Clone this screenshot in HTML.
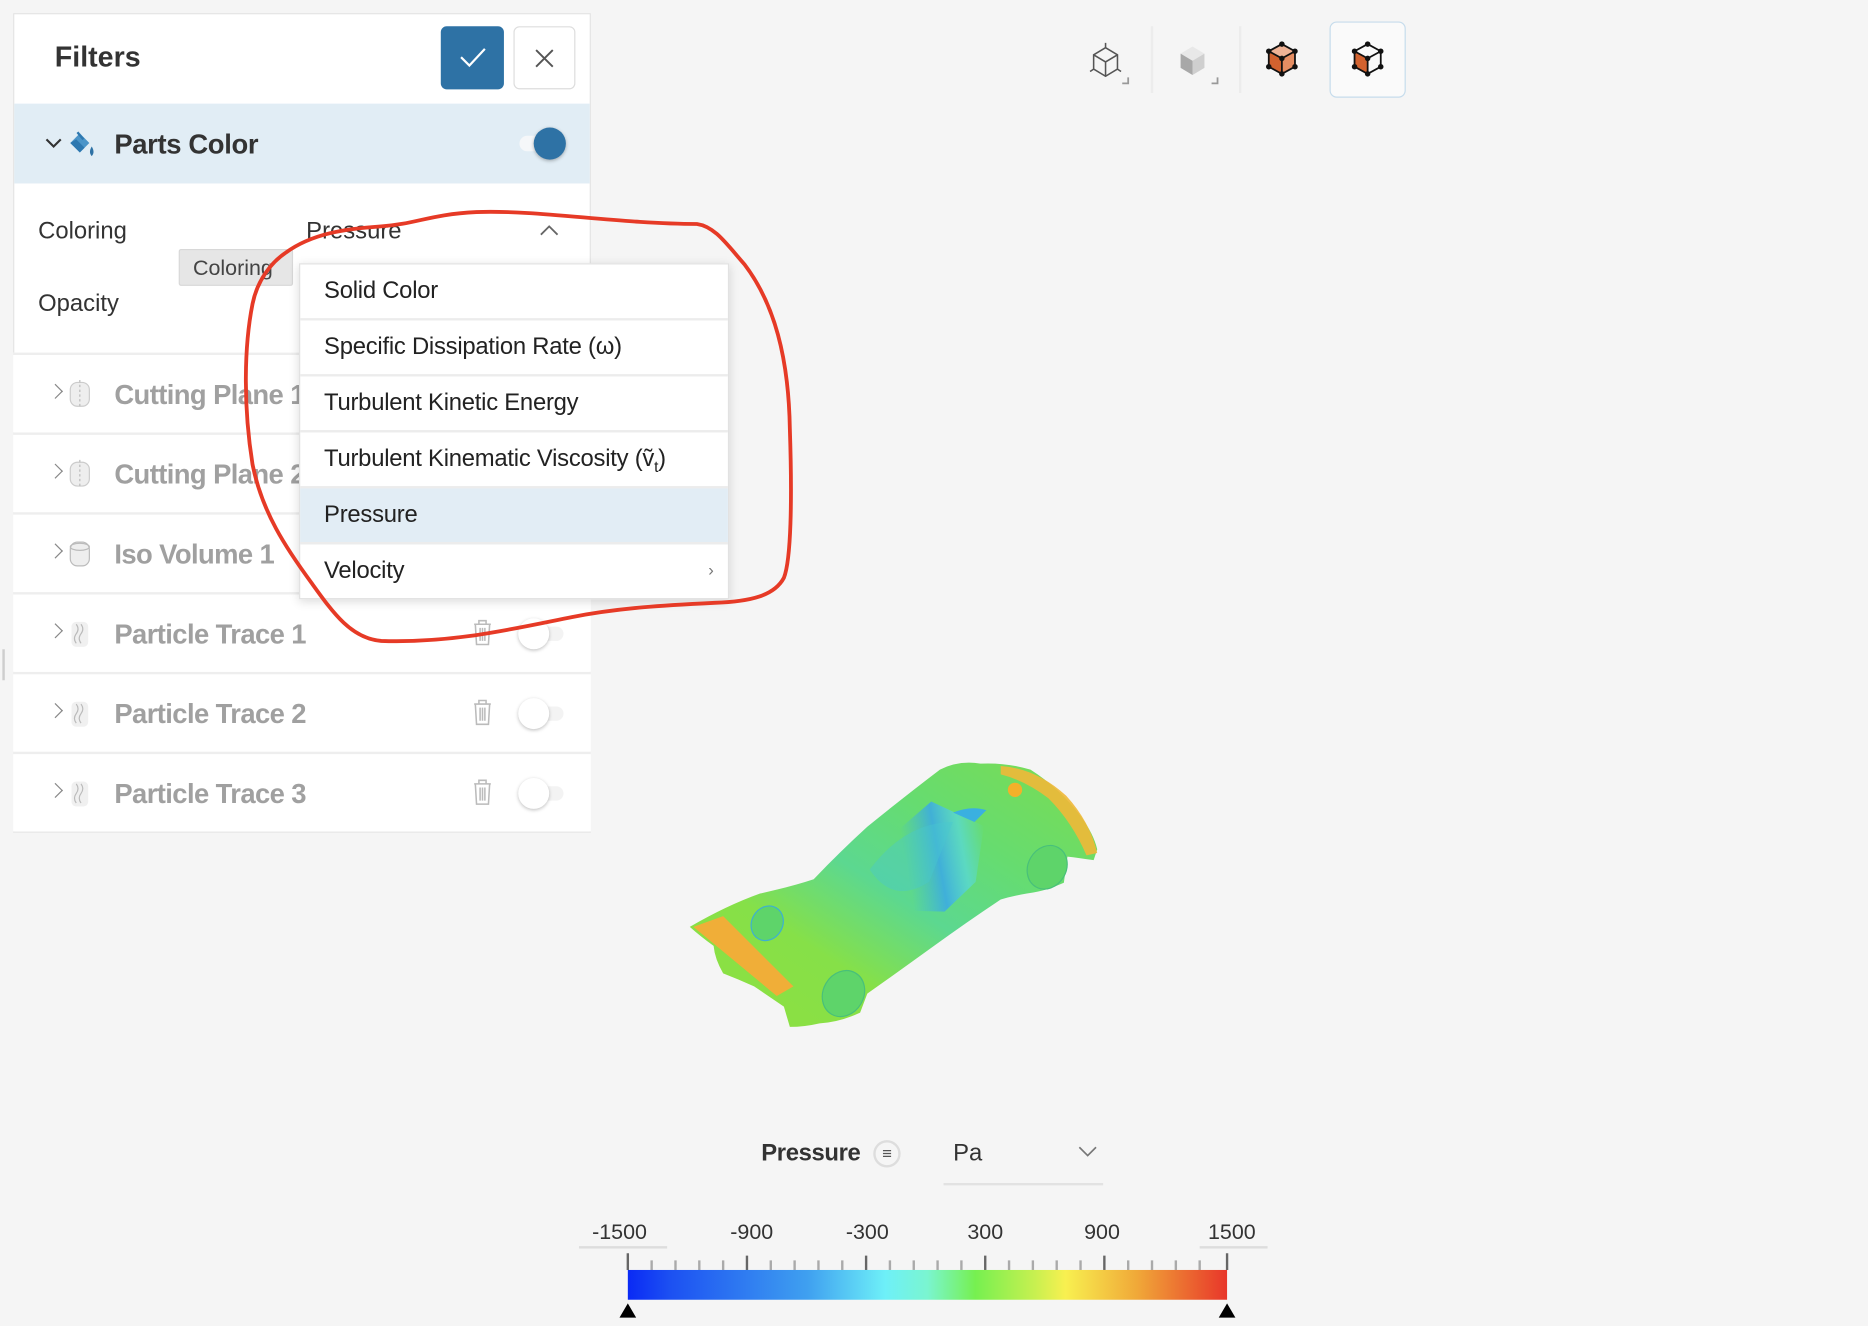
<!DOCTYPE html>
<html><head><meta charset="utf-8">
<style>
*{margin:0;padding:0;box-sizing:border-box}
html,body{width:1868px;height:1326px;overflow:hidden;background:#f5f5f5;font-family:"Liberation Sans",sans-serif}
#s{position:absolute;left:0;top:0;width:1568px;height:1113px;transform:scale(1.19133);transform-origin:0 0;background:#f5f5f5}
.a{position:absolute}
.panel{left:11px;top:11px;width:485px;height:688px;background:#fff;border:1px solid #e4e4e4}
.row{left:11px;width:485px;height:67px;border-top:2px solid #eeeeee;background:#fff}
.rt{position:absolute;left:85px;top:20px;font-size:23px;font-weight:bold;color:#a0a0a0;letter-spacing:-0.5px}
.chev{position:absolute;left:31px;top:26px;width:9px;height:9px;border-right:1.6px solid #888;border-top:1.6px solid #888;transform:rotate(45deg)}
.tog{position:absolute;left:424px;top:20px;width:40px;height:26px}
.tog .tr{position:absolute;left:8px;top:7px;width:30px;height:12px;border-radius:6px;background:#f3f3f3}
.tog .kn{position:absolute;left:0;top:0;width:26px;height:26px;border-radius:50%;background:#fff;box-shadow:0 1px 3px rgba(0,0,0,.25)}
.dd{left:251px;top:221px;width:361px;height:282px;background:#fff;box-shadow:0 2px 8px rgba(0,0,0,.15);border:1px solid #e2e2e2}
.it{position:absolute;left:0;width:359px;height:47px;border-bottom:2px solid #ececec;font-size:20px;color:#222;padding:11px 0 0 20px;letter-spacing:-0.2px}
.lbl{font-size:18px;color:#333;position:absolute;top:1024px}
</style></head><body><div id="s">

<div class="a panel"></div>
<div class="a" style="left:46px;top:35px;font-size:24px;font-weight:bold;color:#333">Filters</div>
<div class="a" style="left:370px;top:22px;width:53px;height:53px;background:#2e72a5;border-radius:5px"></div>
<svg class="a" style="left:384px;top:37px" width="26" height="22"><path d="M3 11 L10 18 L23 4" stroke="#fff" stroke-width="1.8" fill="none"/></svg>
<div class="a" style="left:431px;top:22px;width:52px;height:53px;border:1px solid #ddd;border-radius:5px;background:#fff"></div>
<svg class="a" style="left:447px;top:39px" width="20" height="20"><path d="M3 3L17 17M17 3L3 17" stroke="#555" stroke-width="1.6"/></svg>

<div class="a" style="left:12px;top:87px;width:483px;height:67px;background:#e1edf5"></div>
<svg class="a" style="left:38px;top:115px" width="14" height="10"><path d="M1 2L7 8L13 2" stroke="#333" stroke-width="1.8" fill="none"/></svg>
<svg class="a" style="left:56px;top:108px" width="26" height="26" viewBox="0 0 26 26"><path d="M3 12 L11 4 L19 12 L11 20 Z" fill="#4a94c8"/><path d="M3 12 L11 20 L15 16 L8 9Z" fill="#2d78b0"/><path d="M9 3 L14 9" stroke="#2d78b0" stroke-width="2"/><path d="M21 15 Q24 20 21 23 Q18 20 21 15Z" fill="#2e72a5"/></svg>
<div class="a" style="left:96px;top:108px;font-size:23px;font-weight:bold;color:#333;letter-spacing:-0.3px">Parts Color</div>
<div class="a" style="left:436px;top:114px;width:30px;height:13px;border-radius:7px;background:#f5f7f9"></div>
<div class="a" style="left:448px;top:107px;width:27px;height:27px;border-radius:50%;background:#2e72a5;box-shadow:0 1px 3px rgba(0,0,0,.3)"></div>

<div class="a" style="left:32px;top:183px;font-size:20px;color:#333">Coloring</div>
<div class="a" style="left:257px;top:183px;font-size:20px;color:#333">Pressure</div>
<svg class="a" style="left:453px;top:189px" width="16" height="10"><path d="M1 8L8 1L15 8" stroke="#666" stroke-width="1.5" fill="none"/></svg>
<div class="a" style="left:32px;top:244px;font-size:20px;color:#333">Opacity</div>
<div class="a" style="left:150px;top:209px;width:96px;height:31px;background:#e6e6e6;border:1px solid #d8d8d8;border-radius:2px;font-size:18px;color:#444;padding:5px 0 0 11px">Coloring</div>

<div class="a row" style="top:296px"><div class="chev"></div><svg class="a" style="left:45px;top:20px" width="22" height="26"><rect x="3" y="3" width="16" height="20" rx="6" fill="#eee" stroke="#ccc"/><path d="M11 1V25" stroke="#bbb" stroke-dasharray="2 2"/></svg><div class="rt">Cutting Plane 1</div></div>
<div class="a row" style="top:363px"><div class="chev"></div><svg class="a" style="left:45px;top:20px" width="22" height="26"><rect x="3" y="3" width="16" height="20" rx="6" fill="#eee" stroke="#ccc"/><path d="M11 1V25" stroke="#bbb" stroke-dasharray="2 2"/></svg><div class="rt">Cutting Plane 2</div></div>
<div class="a row" style="top:430px"><div class="chev"></div><svg class="a" style="left:45px;top:20px" width="22" height="26"><rect x="3" y="3" width="16" height="20" rx="6" fill="#eee" stroke="#bbb"/><ellipse cx="11" cy="7" rx="8" ry="3" fill="none" stroke="#bbb"/></svg><div class="rt">Iso Volume 1</div></div>
<div class="a row" style="top:497px"><div class="chev"></div><svg class="a" style="left:48px;top:22px" width="18" height="24"><rect x="1" y="1" width="14" height="21" rx="4" fill="#f0f0f0"/><path d="M5 3q3 4 0 8q-3 4 0 8M9 3q3 4 0 8q-3 4 0 8" stroke="#bbb" fill="none"/></svg><div class="rt">Particle Trace 1</div><svg class="a" style="left:385px;top:20px" width="18" height="24"><path d="M2 5H16M6 5V2H12V5M3 5L4 22H14L15 5M7 8V19M9 8V19M11 8V19" stroke="#bbb" fill="none" stroke-width="1.3"/></svg><div class="tog"><div class="tr"></div><div class="kn"></div></div></div>
<div class="a row" style="top:564px"><div class="chev"></div><svg class="a" style="left:48px;top:22px" width="18" height="24"><rect x="1" y="1" width="14" height="21" rx="4" fill="#f0f0f0"/><path d="M5 3q3 4 0 8q-3 4 0 8M9 3q3 4 0 8q-3 4 0 8" stroke="#bbb" fill="none"/></svg><div class="rt">Particle Trace 2</div><svg class="a" style="left:385px;top:20px" width="18" height="24"><path d="M2 5H16M6 5V2H12V5M3 5L4 22H14L15 5M7 8V19M9 8V19M11 8V19" stroke="#bbb" fill="none" stroke-width="1.3"/></svg><div class="tog"><div class="tr"></div><div class="kn"></div></div></div>
<div class="a row" style="top:631px;height:67px"><div class="chev"></div><svg class="a" style="left:48px;top:22px" width="18" height="24"><rect x="1" y="1" width="14" height="21" rx="4" fill="#f0f0f0"/><path d="M5 3q3 4 0 8q-3 4 0 8M9 3q3 4 0 8q-3 4 0 8" stroke="#bbb" fill="none"/></svg><div class="rt">Particle Trace 3</div><svg class="a" style="left:385px;top:20px" width="18" height="24"><path d="M2 5H16M6 5V2H12V5M3 5L4 22H14L15 5M7 8V19M9 8V19M11 8V19" stroke="#bbb" fill="none" stroke-width="1.3"/></svg><div class="tog"><div class="tr"></div><div class="kn"></div></div></div>
<div class="a" style="left:2px;top:545px;width:2px;height:26px;border-left:1px solid #ccc;border-right:1px solid #ccc"></div>

<div class="a dd">
<div class="it" style="top:0">Solid Color</div>
<div class="it" style="top:47px">Specific Dissipation Rate (ω)</div>
<div class="it" style="top:94px">Turbulent Kinetic Energy</div>
<div class="it" style="top:141px">Turbulent Kinematic Viscosity (ṽ<sub style="font-size:13px">t</sub>)</div>
<div class="it" style="top:188px;background:#e2edf5">Pressure</div>
<div class="it" style="top:235px;border-bottom:none">Velocity<span style="position:absolute;right:12px;top:13px;font-size:14px;color:#777">›</span></div>
</div>

<svg class="a" style="left:0;top:0" width="700" height="560"><path d="M240 212 C262 196 290 192 320 190 C350 188 360 180 400 178 C450 176 520 188 585 188 C600 190 610 205 625 222 C650 255 662 300 663 360 C665 420 664 470 658 485 C650 500 630 505 600 506 C560 508 520 510 480 518 C430 528 380 540 320 538 C295 536 280 515 262 490 C240 460 220 430 212 390 C204 340 205 290 212 255 C216 235 228 220 240 212 Z" fill="none" stroke="#e63a26" stroke-width="3.2"/></svg>

<!-- top right icons -->
<div class="a" style="left:966px;top:22px;width:2px;height:56px;background:#ececec"></div>
<div class="a" style="left:1040px;top:22px;width:2px;height:56px;background:#ececec"></div>
<div class="a" style="left:1116px;top:18px;width:64px;height:64px;border:1.5px solid #c6dcec;border-radius:6px;background:#fafafa"></div>
<svg class="a" style="left:910px;top:34px" width="44" height="40" viewBox="0 0 44 40"><path d="M18 6L28 12V24L18 30L8 24V12Z M8 12L18 18L28 12 M18 18V30 M18 2V6 M5 26L8 24 M31 26L28 24" fill="none" stroke="#555" stroke-width="1.3"/><path d="M32 36H37V31" fill="none" stroke="#999" stroke-width="1.5"/></svg>
<svg class="a" style="left:986px;top:34px" width="44" height="40" viewBox="0 0 44 40"><path d="M15 5L25 11L15 17L5 11Z" fill="#e8e8e8"/><path d="M5 11L15 17V29L5 23Z" fill="#a8a8a8"/><path d="M25 11V23L15 29V17Z" fill="#cfcfcf"/><path d="M31 36H36V31" fill="none" stroke="#999" stroke-width="1.5"/></svg>
<svg class="a" style="left:1058px;top:32px" width="36" height="40" viewBox="0 0 36 40"><path d="M18 5L29 11L18 17L7 11Z" fill="#efb396"/><path d="M7 11L18 17V30L7 24Z" fill="#d2622f"/><path d="M29 11V24L18 30V17Z" fill="#e58d62"/><path d="M18 5L29 11V24L18 30L7 24V11Z M7 11L18 17L29 11 M18 17V30" fill="none" stroke="#111" stroke-width="1.5"/><g fill="#111"><circle cx="18" cy="5" r="2.3"/><circle cx="29" cy="11" r="2.3"/><circle cx="7" cy="11" r="2.3"/><circle cx="18" cy="17" r="2.3"/><circle cx="7" cy="24" r="2.3"/><circle cx="29" cy="24" r="2.3"/><circle cx="18" cy="30" r="2.3"/></g></svg>
<svg class="a" style="left:1130px;top:32px" width="36" height="40" viewBox="0 0 36 40"><path d="M7 11L18 17V30L7 24Z" fill="#d2622f"/><path d="M18 5L29 11V24L18 30L7 24V11Z M7 11L18 17L29 11 M18 17V30" fill="none" stroke="#111" stroke-width="1.5"/><g fill="#111"><circle cx="18" cy="5" r="2.3"/><circle cx="29" cy="11" r="2.3"/><circle cx="7" cy="11" r="2.3"/><circle cx="18" cy="17" r="2.3"/><circle cx="7" cy="24" r="2.3"/><circle cx="29" cy="24" r="2.3"/><circle cx="18" cy="30" r="2.3"/></g></svg>

<!-- car -->
<svg class="a" style="left:560px;top:620px" width="380" height="260" viewBox="560 620 380 260">
<defs>
<linearGradient id="cb" x1="0" y1="1" x2="1" y2="0"><stop offset="0" stop-color="#8ee040"/><stop offset=".3" stop-color="#86e048"/><stop offset=".5" stop-color="#5cd890"/><stop offset=".7" stop-color="#66dc70"/><stop offset="1" stop-color="#7cdc50"/></linearGradient>
<linearGradient id="bl" x1="0" y1="0" x2="1" y2="0"><stop offset="0" stop-color="#3ab4e8" stop-opacity="0"/><stop offset=".4" stop-color="#3aa8e8" stop-opacity=".85"/><stop offset=".7" stop-color="#58d8e0" stop-opacity=".7"/><stop offset="1" stop-color="#58d8e0" stop-opacity="0"/></linearGradient>
</defs>
<path d="M579 778 Q610 760 638 750 Q665 744 683 738 Q705 715 728 694 Q760 668 789 646 Q805 638 823 641 Q845 640 865 646 Q890 662 907 685 Q918 700 921 713 L918 722 Q905 720 896 719 L893 741 Q878 748 862 750 Q850 752 840 755 Q810 775 784 794 Q755 815 728 834 L722 850 Q705 858 688 859 Q675 862 663 862 L658 845 Q645 836 633 828 Q620 822 607 817 Q600 805 599 794 Q588 786 579 778Z" fill="url(#cb)"/>
<path d="M760 690 L790 672 L830 700 L815 745 L785 765 L760 760Z" fill="url(#bl)" transform="rotate(-10 790 720)"/>
<path d="M730 730 Q760 690 800 690 L780 740 Q750 760 730 730Z" fill="#48c8d0" opacity=".4"/>
<path d="M582 778 L607 769 L666 828 L652 836 Z" fill="#f0ae38"/>
<path d="M840 643 Q870 645 895 668 Q915 690 921 716 L912 718 Q900 690 880 670 Q860 655 840 650Z" fill="#f0b838" opacity=".9"/>
<circle cx="852" cy="663" r="6" fill="#f3b02a"/>
<path d="M800 682 Q815 676 828 680 L818 690Z" fill="#3ab0e0"/>
<ellipse cx="708" cy="834" rx="17" ry="20" fill="#5ed46a" stroke="#48c07a" transform="rotate(30 708 834)"/>
<ellipse cx="879" cy="728" rx="16" ry="19" fill="#5ed46a" stroke="#48c07a" transform="rotate(30 879 728)"/>
<ellipse cx="644" cy="775" rx="13" ry="15" fill="#5ed46a" stroke="#3eb0d0" transform="rotate(30 644 775)"/>
</svg>

<!-- legend -->
<div class="a" style="left:639px;top:957px;font-size:20px;font-weight:bold;color:#333;letter-spacing:-0.3px">Pressure</div>
<div class="a" style="left:733px;top:957px;width:23px;height:23px;border:2px solid #ddd;border-radius:50%;font-size:14px;color:#555;text-align:center;line-height:19px">≡</div>
<div class="a" style="left:800px;top:957px;font-size:20px;color:#333">Pa</div>
<svg class="a" style="left:905px;top:962px" width="16" height="10"><path d="M1 1L8 8L15 1" stroke="#777" stroke-width="1.4" fill="none"/></svg>
<div class="a" style="left:792px;top:993px;width:134px;height:1.5px;background:#e2e2e2"></div>

<div class="lbl" style="left:497px">-1500</div>
<div class="lbl" style="left:613px">-900</div>
<div class="lbl" style="left:710px">-300</div>
<div class="lbl" style="left:812px">300</div>
<div class="lbl" style="left:910px">900</div>
<div class="lbl" style="left:1014px">1500</div>
<div class="a" style="left:486px;top:1046px;width:74px;height:1.5px;background:#ddd"></div>
<div class="a" style="left:1007px;top:1046px;width:57px;height:1.5px;background:#ddd"></div>
<svg class="a" style="left:520px;top:1050px" width="520" height="60">
<g stroke="#aaa" stroke-width="2">
<path d="M27 8V16M47 8V16M67 8V16M87 8V16M127 8V16M147 8V16M167 8V16M187 8V16M227 8V16M247 8V16M267 8V16M287 8V16M327 8V16M347 8V16M367 8V16M387 8V16M427 8V16M447 8V16M467 8V16M487 8V16"/></g>
<g stroke="#666" stroke-width="2"><path d="M7 2V16M107 4V16M207 4V16M307 4V16M407 4V16M510 2V16"/></g>
<defs><linearGradient id="cg"><stop offset="0" stop-color="#0a2af5"/><stop offset=".07" stop-color="#1c50f2"/><stop offset=".3" stop-color="#3fa0f0"/><stop offset=".43" stop-color="#6ef0f8"/><stop offset=".5" stop-color="#7af5d0"/><stop offset=".58" stop-color="#76f050"/><stop offset=".68" stop-color="#c8f050"/><stop offset=".73" stop-color="#f8f050"/><stop offset=".85" stop-color="#f0a838"/><stop offset="1" stop-color="#e8362a"/></linearGradient></defs>
<rect x="7" y="16" width="503" height="25" fill="url(#cg)"/>
<path d="M7 44L0 56H14Z M510 44L503 56H517Z" fill="#000"/>
</svg>

</div></body></html>
